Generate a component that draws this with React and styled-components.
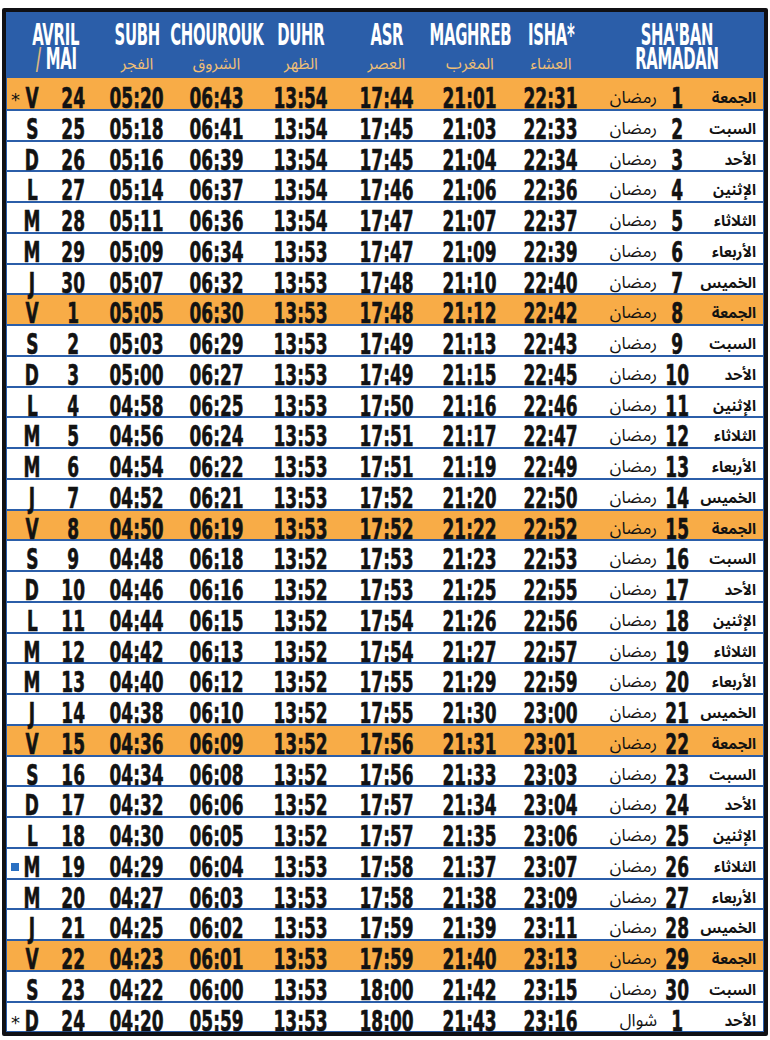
import React from "react";
import styled, { createGlobalStyle } from "styled-components";

const GlobalStyle = createGlobalStyle`
  body {
    margin: 0;
    background: #ffffff;
    font-family: "Liberation Sans", Arial, sans-serif;
  }
`;

const BLUE = "#2b5ea9";
const ORANGE = "#f8ac47";
const COLS = "14px 22px 56px 76px 83px 86px 85px 82px 80px 1fr";

const days = [
  { l: "V", ar: "الجمعة" },
  { l: "S", ar: "السبت" },
  { l: "D", ar: "الأحد" },
  { l: "L", ar: "الإثنين" },
  { l: "M", ar: "الثلاثاء" },
  { l: "M", ar: "الأربعاء" },
  { l: "J", ar: "الخميس" },
];

const raw = [
  ["24", "05:20", "06:43", "13:54", "17:44", "21:01", "22:31"],
  ["25", "05:18", "06:41", "13:54", "17:45", "21:03", "22:33"],
  ["26", "05:16", "06:39", "13:54", "17:45", "21:04", "22:34"],
  ["27", "05:14", "06:37", "13:54", "17:46", "21:06", "22:36"],
  ["28", "05:11", "06:36", "13:54", "17:47", "21:07", "22:37"],
  ["29", "05:09", "06:34", "13:53", "17:47", "21:09", "22:39"],
  ["30", "05:07", "06:32", "13:53", "17:48", "21:10", "22:40"],
  ["1", "05:05", "06:30", "13:53", "17:48", "21:12", "22:42"],
  ["2", "05:03", "06:29", "13:53", "17:49", "21:13", "22:43"],
  ["3", "05:00", "06:27", "13:53", "17:49", "21:15", "22:45"],
  ["4", "04:58", "06:25", "13:53", "17:50", "21:16", "22:46"],
  ["5", "04:56", "06:24", "13:53", "17:51", "21:17", "22:47"],
  ["6", "04:54", "06:22", "13:53", "17:51", "21:19", "22:49"],
  ["7", "04:52", "06:21", "13:53", "17:52", "21:20", "22:50"],
  ["8", "04:50", "06:19", "13:53", "17:52", "21:22", "22:52"],
  ["9", "04:48", "06:18", "13:52", "17:53", "21:23", "22:53"],
  ["10", "04:46", "06:16", "13:52", "17:53", "21:25", "22:55"],
  ["11", "04:44", "06:15", "13:52", "17:54", "21:26", "22:56"],
  ["12", "04:42", "06:13", "13:52", "17:54", "21:27", "22:57"],
  ["13", "04:40", "06:12", "13:52", "17:55", "21:29", "22:59"],
  ["14", "04:38", "06:10", "13:52", "17:55", "21:30", "23:00"],
  ["15", "04:36", "06:09", "13:52", "17:56", "21:31", "23:01"],
  ["16", "04:34", "06:08", "13:52", "17:56", "21:33", "23:03"],
  ["17", "04:32", "06:06", "13:52", "17:57", "21:34", "23:04"],
  ["18", "04:30", "06:05", "13:52", "17:57", "21:35", "23:06"],
  ["19", "04:29", "06:04", "13:53", "17:58", "21:37", "23:07"],
  ["20", "04:27", "06:03", "13:53", "17:58", "21:38", "23:09"],
  ["21", "04:25", "06:02", "13:53", "17:59", "21:39", "23:11"],
  ["22", "04:23", "06:01", "13:53", "17:59", "21:40", "23:13"],
  ["23", "04:22", "06:00", "13:53", "18:00", "21:42", "23:15"],
  ["24", "04:20", "05:59", "13:53", "18:00", "21:43", "23:16"],
];

const rows = raw.map((r, i) => ({
  day: days[i % 7],
  date: r[0],
  times: r.slice(1),
  hijri: i === 30 ? 1 : i + 1,
  month: i === 30 ? "شوال" : "رمضان",
  mark: i === 0 || i === 30 ? "star" : i === 25 ? "square" : null,
}));

const headers = [
  { fr: "SUBH", ar: "الفجر" },
  { fr: "CHOUROUK", ar: "الشروق" },
  { fr: "DUHR", ar: "الظهر" },
  { fr: "ASR", ar: "العصر" },
  { fr: "MAGHREB", ar: "المغرب" },
  { fr: "ISHA*", ar: "العشاء" },
];

export default function App() {
  return (
    <>
      <GlobalStyle />
      <Frame>
        <Table>
          <Header>
            <span />
            <MonthHead>
              <HeadWord>AVRIL</HeadWord>
              <HeadWord>
                <Slash>/</Slash> MAI
              </HeadWord>
            </MonthHead>
            {headers.map((h) => (
              <HeadCell key={h.fr}>
                <HeadWord>{h.fr}</HeadWord>
                <ArabicSub>{h.ar}</ArabicSub>
              </HeadCell>
            ))}
            <HeadCell>
              <HeadWord>SHA'BAN</HeadWord>
              <HeadWord>RAMADAN</HeadWord>
            </HeadCell>
          </Header>
          {rows.map((r, i) => (
            <Row key={i} $friday={r.day.l === "V"}>
              <Marker>
                {r.mark === "star" && <Star>*</Star>}
                {r.mark === "square" && <Square />}
              </Marker>
              <Cell>
                <Num>{r.day.l}</Num>
              </Cell>
              <Cell $shift={4}>
                <Num>{r.date}</Num>
              </Cell>
              {r.times.map((t, j) => (
                <Cell key={j}>
                  <Num>{t}</Num>
                </Cell>
              ))}
              <Hijri>
                <MonthName>{r.month}</MonthName>
                <HijriNum>
                  <Num>{r.hijri}</Num>
                </HijriNum>
                <DayName>{r.day.ar}</DayName>
              </Hijri>
            </Row>
          ))}
        </Table>
      </Frame>
    </>
  );
}

const Frame = styled.div`
  box-sizing: border-box;
  width: 766px;
  margin: 8px 0 0 2px;
  border: 4px solid #101014;
  border-radius: 2px;
`;

const Table = styled.div`
  border: 1.5px solid ${BLUE};
  border-top: none;
  background: #ffffff;
`;

const Header = styled.div`
  display: grid;
  grid-template-columns: ${COLS};
  height: 66px;
  background: ${BLUE};
  color: #ffffff;
`;

const HeadCell = styled.div`
  display: flex;
  flex-direction: column;
  align-items: center;
  padding-top: 11px;
`;

const MonthHead = styled(HeadCell)`
  grid-column: span 2;
  padding-right: 8px;
`;

const HeadWord = styled.span`
  display: inline-block;
  font-family: "Liberation Sans Narrow", "DejaVu Sans Condensed", sans-serif;
  font-weight: bold;
  font-size: 30px;
  line-height: 24px;
  height: 24px;
  transform: scaleX(0.55);
  white-space: nowrap;
  letter-spacing: -0.5px;
`;

const Slash = styled.span`
  color: #d9b681;
`;

const ArabicSub = styled.span`
  margin-top: 8px;
  font-family: "Noto Sans Arabic", "DejaVu Sans", sans-serif;
  font-size: 16px;
  line-height: 18px;
  color: #efbf76;
`;

const Row = styled.div`
  display: grid;
  grid-template-columns: ${COLS};
  box-sizing: border-box;
  height: 30.75px;
  border-top: 2px solid ${BLUE};
  background: ${(p) => (p.$friday ? ORANGE : "#ffffff")};
  color: #121212;
  &:nth-child(2) {
    border-top-color: ${ORANGE};
  }
`;

const Cell = styled.div`
  display: flex;
  align-items: center;
  justify-content: center;
  padding-left: ${(p) => p.$shift || 0}px;
`;

const Num = styled.span`
  display: inline-block;
  font-family: "Liberation Sans Narrow", "DejaVu Sans Condensed", sans-serif;
  font-weight: bold;
  font-size: 29px;
  line-height: 28px;
  transform: scaleX(0.65);
  -webkit-text-stroke: 0.6px currentColor;
  white-space: nowrap;
`;

const Marker = styled.div`
  display: flex;
  align-items: center;
  justify-content: flex-start;
  padding-left: 4px;
`;

const Star = styled.span`
  font-family: "DejaVu Sans", sans-serif;
  font-size: 18px;
  line-height: 16px;
  margin-top: 4px;
`;

const Square = styled.span`
  width: 8px;
  height: 8px;
  background: #2a70c2;
`;

const Hijri = styled.div`
  display: flex;
  align-items: center;
`;

const MonthName = styled.span`
  width: 66px;
  text-align: right;
  font-family: "Noto Sans Arabic", "DejaVu Sans", sans-serif;
  font-size: 17px;
`;

const HijriNum = styled.span`
  width: 40px;
  display: flex;
  justify-content: center;
`;

const DayName = styled.span`
  flex: 1;
  text-align: right;
  padding-right: 7px;
  font-family: "Noto Sans Arabic", "DejaVu Sans", sans-serif;
  font-weight: bold;
  font-size: 15px;
`;
